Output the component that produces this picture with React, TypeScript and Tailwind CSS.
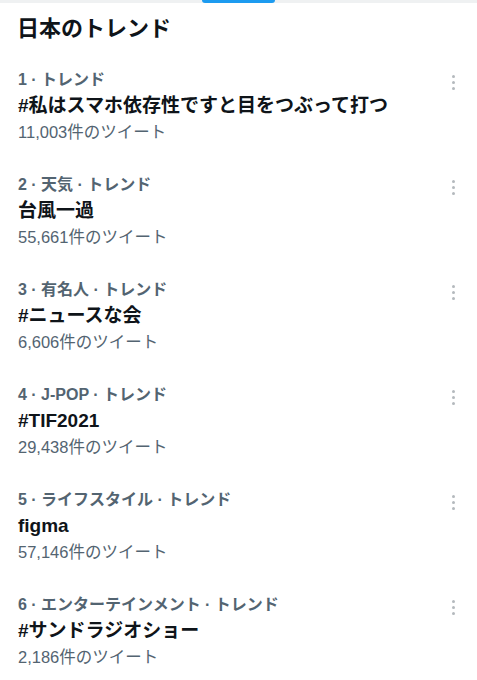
const trends = [
  { meta: "1 · トレンド", title: "#私はスマホ依存性ですと目をつぶって打つ", count: "11,003件のツイート" },
  { meta: "2 · 天気 · トレンド", title: "台風一過", count: "55,661件のツイート" },
  { meta: "3 · 有名人 · トレンド", title: "#ニュースな会", count: "6,606件のツイート" },
  { meta: "4 · J-POP · トレンド", title: "#TIF2021", count: "29,438件のツイート" },
  { meta: "5 · ライフスタイル · トレンド", title: "figma", count: "57,146件のツイート" },
  { meta: "6 · エンターテインメント · トレンド", title: "#サンドラジオショー", count: "2,186件のツイート" },
];

const MoreDots = () => (
  <div className="flex flex-col items-center gap-[3px] pt-[8px]">
    <span className="h-[3px] w-[3px] rounded-full bg-[#b4b9bd]" />
    <span className="h-[3px] w-[3px] rounded-full bg-[#b4b9bd]" />
    <span className="h-[3px] w-[3px] rounded-full bg-[#b4b9bd]" />
  </div>
);

export default function App() {
  return (
    <div
      className="h-[680px] w-[477px] overflow-hidden bg-white text-[#0f1419]"
      style={{ fontFamily: '"Liberation Sans", "Noto Sans CJK JP", sans-serif' }}
    >
      <div className="h-[3px] bg-[#eff1f2]">
        <div className="ml-[202px] h-[3px] w-[73px] rounded-b-sm bg-[#1d9bf0]" />
      </div>
      <h1 className="px-[17px] pt-[12px] text-[22px] font-bold leading-[28px]">日本のトレンド</h1>
      <div className="mt-[20px]">
        {trends.map((t) => (
          <div key={t.meta} className="flex h-[105px] justify-between pl-[18px] pr-[22px] pt-[4px]">
            <div className="flex flex-col">
              <span className="text-[16px] font-bold leading-[26px] text-[#536471]">{t.meta}</span>
              <span className="text-[19px] font-bold leading-[26px]">{t.title}</span>
              <span className="text-[16.5px] leading-[26px] text-[#536471]">{t.count}</span>
            </div>
            <MoreDots />
          </div>
        ))}
      </div>
    </div>
  );
}
